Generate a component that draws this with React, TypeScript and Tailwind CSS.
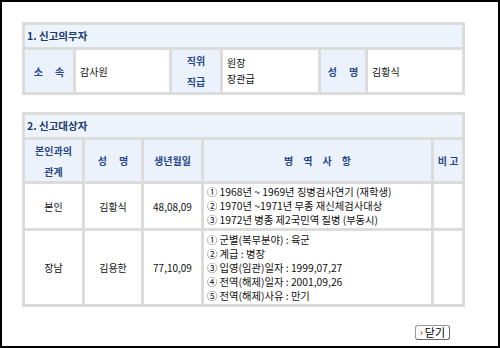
import React from 'react';

const font = { fontFamily: '"Noto Sans CJK KR", "Noto Sans", sans-serif' };

const label = 'bg-[#ecf2fb] text-[#27478a] font-bold flex flex-col items-center justify-center leading-[21px]';
const cell = 'bg-white text-[#111] flex items-center';
const title = 'bg-[#eef4fc] text-[#1c3a6e] font-bold flex items-center pl-[2px] text-[10.5px]';

export default function App() {
  return (
    <div className="w-[500px] h-[348px] border-2 border-black bg-white pt-[20px] pl-[20px] text-[10px]" style={font}>
      {/* 1. 신고의무자 */}
      <div className="w-[443px] grid grid-cols-[48px_93px_48px_95px_44px_94px] grid-rows-[22px_42px] gap-[3px] p-[3px] bg-[#dcdcdc]">
        <div className={title + ' col-span-6'}>1. 신고의무자</div>
        <div className={label}><span className="tracking-[12px] -mr-[12px]">소속</span></div>
        <div className={cell + ' pl-[4px]'}>감사원</div>
        <div className={label}><span>직위</span><span>직급</span></div>
        <div className={cell + ' pl-[4px] flex-col !items-start justify-center leading-[16px]'}><span>원장</span><span>장관급</span></div>
        <div className={label}><span className="tracking-[12px] -mr-[12px]">성명</span></div>
        <div className={cell + ' pl-[4px]'}>김황식</div>
      </div>

      {/* 2. 신고대상자 */}
      <div className="mt-[17px] w-[443px] grid grid-cols-[57px_56px_57px_227px_28px] grid-rows-[22px_41px_44px_73px] gap-[3px] p-[3px] bg-[#dcdcdc]">
        <div className={title + ' col-span-5'}>2. 신고대상자</div>
        <div className={label}><span>본인과의</span><span>관계</span></div>
        <div className={label}><span className="tracking-[12px] -mr-[12px]">성명</span></div>
        <div className={label}><span>생년월일</span></div>
        <div className={label}><span className="tracking-[10px] -mr-[10px]">병역사항</span></div>
        <div className={label + ' overflow-hidden'}><span className="whitespace-nowrap">비 고</span></div>

        <div className={cell + ' justify-center'}>본인</div>
        <div className={cell + ' justify-center'}>김황식</div>
        <div className={cell + ' justify-center'}>48,08,09</div>
        <div className={cell + ' flex-col !items-start justify-center pl-[3px] leading-[14px] whitespace-nowrap text-[10.3px]'}>
          <span>① 1968년 ~ 1969년 징병검사연기 (재학생)</span>
          <span>② 1970년 ~1971년 무종 재신체검사대상</span>
          <span>③ 1972년 병종 제2국민역 질병 (부동시)</span>
        </div>
        <div className={cell}></div>

        <div className={cell + ' justify-center'}>장남</div>
        <div className={cell + ' justify-center'}>김용한</div>
        <div className={cell + ' justify-center'}>77,10,09</div>
        <div className={cell + ' flex-col !items-start justify-center pl-[3px] leading-[14px] whitespace-nowrap text-[10.3px]'}>
          <span>① 군별(복무분야) : 육군</span>
          <span>② 계급 : 병장</span>
          <span>③ 입영(임관)일자 : 1999,07,27</span>
          <span>④ 전역(해제)일자 : 2001,09,26</span>
          <span>⑤ 전역(해제)사유 : 만기</span>
        </div>
        <div className={cell}></div>
      </div>

      <div className="w-[443px] flex justify-end pr-[15px] mt-[18px]">
        <button className="h-[15px] w-[35px] border border-[#999] border-r-[#666] border-b-[#666] rounded-[3px] bg-white flex items-center justify-center gap-[2px] text-[11px] leading-none text-black">
          <span className="text-[#e0401a] text-[9px] font-bold">›</span>
          <span>닫기</span>
        </button>
      </div>
    </div>
  );
}
